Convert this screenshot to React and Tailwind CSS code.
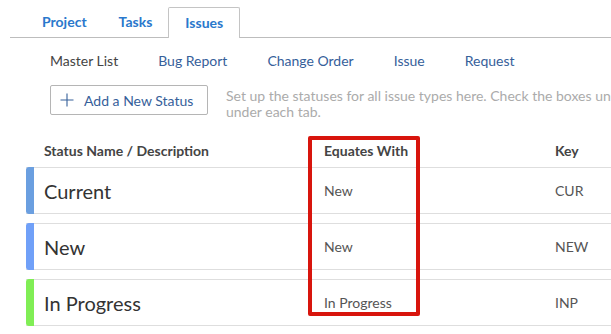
import React from 'react';

const tabs = ['Project', 'Tasks', 'Issues'];
const subTabs = ['Master List', 'Bug Report', 'Change Order', 'Issue', 'Request'];

const statuses = [
  { name: 'Current', equates: 'New', key: 'CUR', bar: 'bg-[#6b9fe0]' },
  { name: 'New', equates: 'New', key: 'NEW', bar: 'bg-[#70a0f8]' },
  { name: 'In Progress', equates: 'In Progress', key: 'INP', bar: 'bg-[#80ee55]' },
];

export default function App() {
  return (
    <div className="relative w-[611px] h-[334px] overflow-hidden bg-white font-['Lato',sans-serif]">
      {/* top tabs */}
      <div className="ml-[10px] pt-[7px] pl-[16px] flex border-b border-[#bdbdbd] w-[700px]">
        {tabs.map(tab => (
          <div
            key={tab}
            className={`h-[30px] pb-[2px] px-[16px] flex items-center text-[14px] font-bold text-[#2a78cc] ${
              tab === 'Issues' ? 'bg-white border border-b-0 border-[#c4c4c4] rounded-t-[2px] -mb-px h-[31px]' : ''
            }`}
          >
            {tab}
          </div>
        ))}
      </div>

      {/* sub tabs */}
      <div className="flex gap-[40px] pl-[50px] mt-[13px] h-[18px] items-center text-[14px]">
        {subTabs.map(t => (
          <span key={t} className={t === 'Master List' ? 'text-[#444]' : 'text-[#36609a]'}>{t}</span>
        ))}
      </div>

      {/* add status + help */}
      <div className="flex items-start mt-[16px] pl-[50px] w-[900px]">
        <button className="w-[158px] h-[30px] border border-[#b5b5b5] rounded-[2px] flex items-center pl-[9px] gap-[10px] text-[14px] text-[#36609a]">
          <svg width="14" height="14" viewBox="0 0 14 14" className="shrink-0">
            <path d="M7 0.5V13.5M0.5 7H13.5" stroke="#36609a" strokeWidth="1.1" />
          </svg>
          Add a New Status
        </button>
        <p className="ml-[18px] mt-[3px] text-[14px] leading-[16px] text-[#ababab] whitespace-nowrap">
          Set up the statuses for all issue types here. Check the boxes under the columns that apply
          <br />
          under each tab.
        </p>
      </div>

      {/* table header */}
      <div className="flex mt-[21px] h-[18px] items-center text-[14px] font-bold text-[#444]">
        <div className="w-[324px] pl-[44px]">Status Name / Description</div>
        <div className="w-[231px]">Equates With</div>
        <div>Key</div>
      </div>

      {/* rows */}
      <div className="mt-[8px] ml-[26px] flex flex-col gap-[9px] w-[620px]">
        {statuses.map(s => (
          <div key={s.name} className="flex h-[47px] border-y border-[#dedede]">
            <div className={`w-[8px] -my-px rounded-l-[3px] ${s.bar}`} />
            <div className="w-[290px] pl-[10px] flex items-center text-[20px] text-[#333]">{s.name}</div>
            <div className="w-[231px] flex items-center text-[14px] text-[#555]">{s.equates}</div>
            <div className="flex items-center text-[14px] text-[#555]">{s.key}</div>
          </div>
        ))}
      </div>

      {/* highlight annotation */}
      <div className="absolute left-[308px] top-[136px] w-[112px] h-[180px] border-[4px] border-[#d8150d] rounded-[2px]" />
    </div>
  );
}
